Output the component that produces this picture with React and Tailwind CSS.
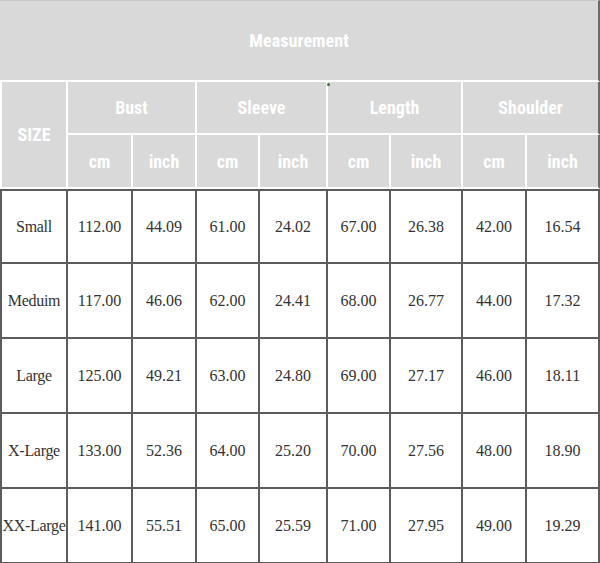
import React from "react";

const rows = [
  ["Small", "112.00", "44.09", "61.00", "24.02", "67.00", "26.38", "42.00", "16.54"],
  ["Meduim", "117.00", "46.06", "62.00", "24.41", "68.00", "26.77", "44.00", "17.32"],
  ["Large", "125.00", "49.21", "63.00", "24.80", "69.00", "27.17", "46.00", "18.11"],
  ["X-Large", "133.00", "52.36", "64.00", "25.20", "70.00", "27.56", "48.00", "18.90"],
  ["XX-Large", "141.00", "55.51", "65.00", "25.59", "71.00", "27.95", "49.00", "19.29"],
];

const groups = ["Bust", "Sleeve", "Length", "Shoulder"];

const head = "bg-[#d9d9d9] text-white font-bold text-[18px] text-center align-middle border-r-2 border-b-2 border-white p-0";
const body = "text-[#333] text-[16px] text-center align-middle border-r-2 border-b-2 border-[#5c5c5c] p-0 whitespace-nowrap";

export default function App() {
  return (
    <div className="w-[600px] h-[563px] bg-white">
      <table
        className="w-[600px] table-fixed border-separate border-spacing-0"
        style={{ fontFamily: '"Liberation Sans Narrow", "Roboto Condensed", "Liberation Sans", sans-serif' }}
      >
        <colgroup>
          <col className="w-[68px]" />
          <col className="w-[65px]" />
          <col className="w-[64px]" />
          <col className="w-[63px]" />
          <col className="w-[68px]" />
          <col className="w-[63px]" />
          <col className="w-[72px]" />
          <col className="w-[64px]" />
          <col className="w-[73px]" />
        </colgroup>
        <thead>
          <tr className="h-[82px]">
            <th colSpan={9} className={head + " border-t border-t-[#c8c8c8] border-r-[#6a6a6a] tracking-[0.1px]"}>
              Measurement
            </th>
          </tr>
          <tr className="h-[53px]">
            <th rowSpan={2} className={head + " border-l-2 border-l-white"}>SIZE</th>
            {groups.map((g, i) => (
              <th key={g} colSpan={2} className={head + (i === 3 ? " border-r-[#6a6a6a]" : "") + " relative"}>
                {g}
                {i === 2 && (
                  <span className="absolute left-[-1px] top-[1px] w-[3px] h-[3px] bg-[#3f6b3a] rounded-full" />
                )}
              </th>
            ))}
          </tr>
          <tr className="h-[54px]">
            {groups.map((g, i) => (
              <React.Fragment key={g}>
                <th className={head}>cm</th>
                <th className={head + (i === 3 ? " border-r-[#6a6a6a]" : "")}>inch</th>
              </React.Fragment>
            ))}
          </tr>
        </thead>
        <tbody style={{ fontFamily: '"Liberation Serif", "Noto Sans CJK SC", serif' }}>
          {rows.map((r, ri) => (
            <tr key={ri} className="h-[75px]">
              {r.map((c, ci) => (
                <td
                  key={ci}
                  className={
                    body +
                    (ci === 0 ? " border-l-2 border-l-[#5c5c5c] tracking-[-0.3px]" : "") +
                    (ri === 0 ? " border-t-2 border-t-[#5c5c5c]" : "")
                  }
                >
                  {c}
                </td>
              ))}
            </tr>
          ))}
        </tbody>
      </table>
    </div>
  );
}
